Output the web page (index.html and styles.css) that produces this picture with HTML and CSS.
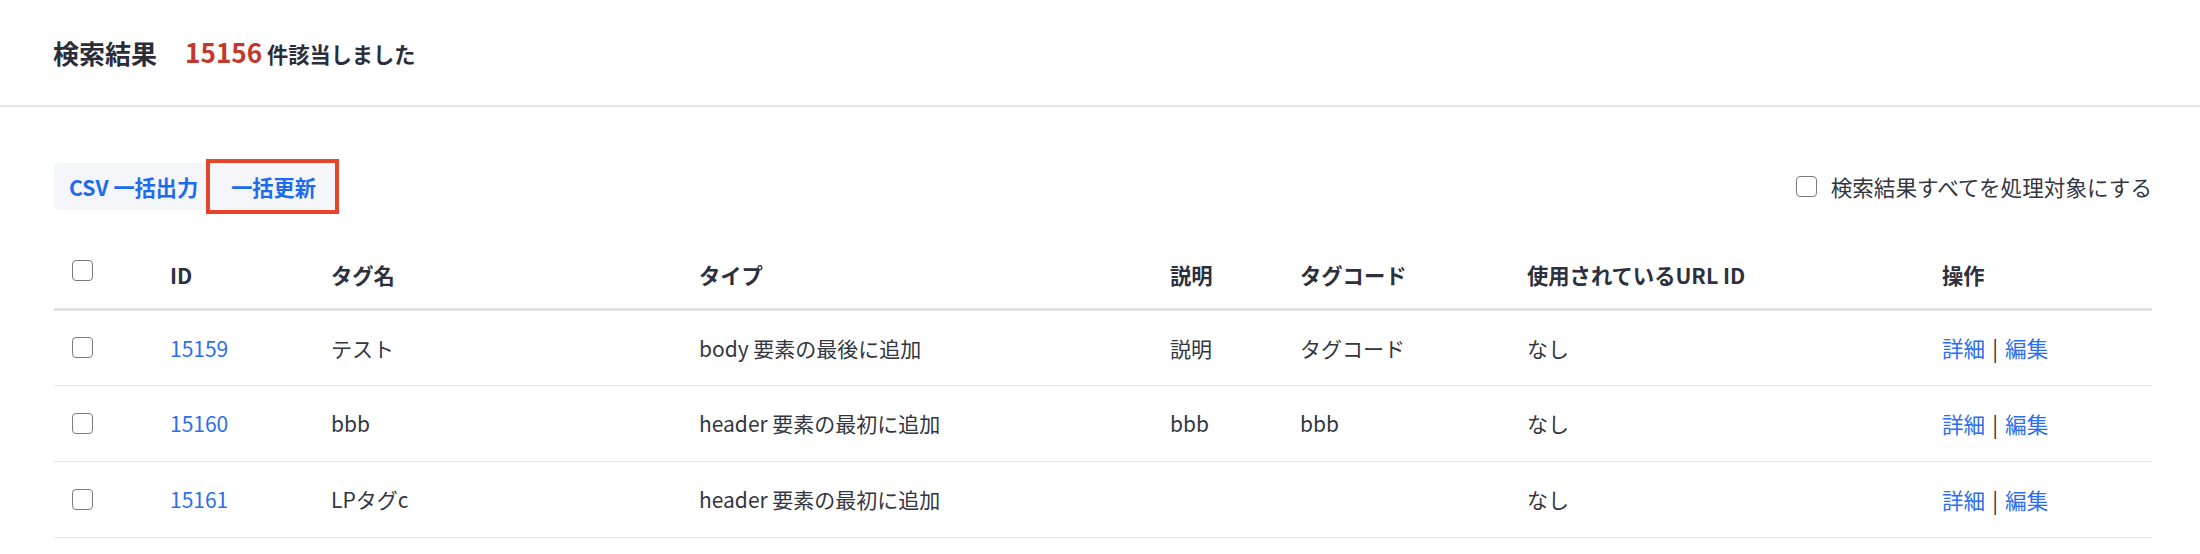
FILE: index.html
```html
<!DOCTYPE html>
<html lang="ja">
<head>
<meta charset="utf-8">
<title>検索結果</title>
<link rel="stylesheet" href="styles.css">
</head>
<body>
<header class="result-head">
  <h1 class="result-title">検索結果</h1>
  <p class="result-count"><span class="count-num">15156</span> 件該当しました</p>
</header>
<main class="content">
  <div class="toolbar">
    <div class="btn-group">
      <button class="btn btn-first" type="button">CSV 一括出力</button>
      <button class="btn btn-marked" type="button">一括更新</button>
    </div>
    <label class="select-all"><input type="checkbox" class="cb"><span>検索結果すべてを処理対象にする</span></label>
  </div>
  <table class="tags">
    <colgroup>
      <col class="c-check"><col class="c-id"><col class="c-name"><col class="c-type"><col class="c-desc"><col class="c-code"><col class="c-url"><col class="c-ops">
    </colgroup>
    <thead>
      <tr>
        <th class="cell-check"><input type="checkbox" class="cb"></th>
        <th>ID</th>
        <th>タグ名</th>
        <th>タイプ</th>
        <th>説明</th>
        <th>タグコード</th>
        <th>使用されているURL ID</th>
        <th>操作</th>
      </tr>
    </thead>
    <tbody>
      <tr>
        <td class="cell-check"><input type="checkbox" class="cb"></td>
        <td><a class="link" href="#">15159</a></td>
        <td>テスト</td>
        <td>body 要素の最後に追加</td>
        <td>説明</td>
        <td>タグコード</td>
        <td>なし</td>
        <td class="ops"><a class="link" href="#">詳細</a><span class="sep">|</span><a class="link" href="#">編集</a></td>
      </tr>
      <tr>
        <td class="cell-check"><input type="checkbox" class="cb"></td>
        <td><a class="link" href="#">15160</a></td>
        <td>bbb</td>
        <td>header 要素の最初に追加</td>
        <td>bbb</td>
        <td>bbb</td>
        <td>なし</td>
        <td class="ops"><a class="link" href="#">詳細</a><span class="sep">|</span><a class="link" href="#">編集</a></td>
      </tr>
      <tr>
        <td class="cell-check"><input type="checkbox" class="cb"></td>
        <td><a class="link" href="#">15161</a></td>
        <td>LPタグc</td>
        <td>header 要素の最初に追加</td>
        <td></td>
        <td></td>
        <td>なし</td>
        <td class="ops"><a class="link" href="#">詳細</a><span class="sep">|</span><a class="link" href="#">編集</a></td>
      </tr>
    </tbody>
  </table>
</main>
</body>
</html>
```

FILE: styles.css
```css
* { box-sizing: border-box; }

body {
  margin: 0;
  background: #ffffff;
  color: #2f3241;
  font-family: "Noto Sans CJK JP", "Noto Sans", sans-serif;
}

.result-head {
  height: 107px;
  display: flex;
  align-items: center;
  padding-left: 53px;
  border-bottom: 2px solid #e3e3e3;
}

.result-title {
  margin: 0;
  font-size: 26px;
  font-weight: 700;
  line-height: 1;
  color: #2b2e3a;
}

.result-count {
  margin: 0 0 0 28px;
  font-size: 21.2px;
  font-weight: 700;
  line-height: 1;
  color: #2b2e3a;
}

.count-num {
  font-size: 26.2px;
  color: #c4382c;
}

.content {
  padding: 56px 48px 0 54px;
}

.toolbar {
  display: flex;
  align-items: center;
  justify-content: space-between;
}

.btn-group {
  display: flex;
  height: 47px;
  background: #f4f6f9;
  border-radius: 5px;
}

.btn {
  border: 0;
  margin: 0;
  background: transparent;
  font-family: inherit;
  font-size: 21.2px;
  font-weight: 700;
  color: #1d6cf0;
  height: 47px;
  line-height: 1;
  cursor: pointer;
}

.btn-first {
  padding: 0 12px 0 15px;
}

.btn-marked {
  padding: 0 19px 0 21px;
  background: #f4f6f9;
  outline: 4px solid #e8442c;
}

.select-all {
  display: flex;
  align-items: center;
  gap: 14px;
  font-size: 21.6px;
  color: #33363f;
  line-height: 1;
}

.cb {
  appearance: none;
  -webkit-appearance: none;
  margin: 0;
  width: 21px;
  height: 21px;
  border: 1.5px solid #7b7b7b;
  border-radius: 4px;
  background: #fff;
  display: block;
}

.tags {
  margin-top: 24px;
  width: 100%;
  border-collapse: collapse;
  table-layout: fixed;
}

.c-check { width: 98px; }
.c-id { width: 161px; }
.c-name { width: 368px; }
.c-type { width: 471px; }
.c-desc { width: 130px; }
.c-code { width: 227px; }
.c-url { width: 415px; }
.c-ops { width: 228px; }

.tags th {
  height: 75px;
  padding: 8px 18px 0;
  text-align: left;
  vertical-align: middle;
  font-size: 21.3px;
  font-weight: 700;
  color: #2d303d;
  border-bottom: 3px solid #e2e2e8;
  white-space: nowrap;
}

.tags th.cell-check {
  padding: 0 18px;
}

.tags td {
  height: 76px;
  padding: 0 18px;
  vertical-align: middle;
  font-size: 21px;
  color: #33363f;
  border-bottom: 1px solid #e3e3e9;
  white-space: nowrap;
}

.tags td.ops {
  font-size: 21.6px;
}

.link {
  color: #2b6ef0;
  text-decoration: none;
}

.sep {
  color: #2f3241;
  margin: 0 7px;
}
```
